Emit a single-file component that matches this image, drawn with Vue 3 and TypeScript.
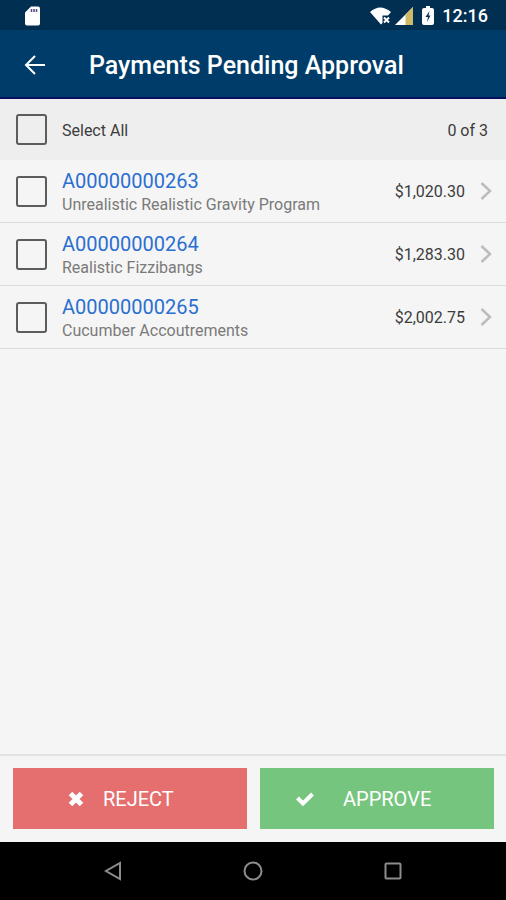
<script setup lang="ts">
import { computed, ref } from 'vue'

interface Payment {
  id: string
  program: string
  amount: number
}

const payments: Payment[] = [
  { id: 'A00000000263', program: 'Unrealistic Realistic Gravity Program', amount: 1020.3 },
  { id: 'A00000000264', program: 'Realistic Fizzibangs', amount: 1283.3 },
  { id: 'A00000000265', program: 'Cucumber Accoutrements', amount: 2002.75 },
]

const selected = ref<string[]>([])

const allSelected = computed<boolean>({
  get: () => selected.value.length === payments.length,
  set: (on) => {
    selected.value = on ? payments.map((p) => p.id) : []
  },
})

function money(value: number): string {
  return '$' + value.toLocaleString('en-US', { minimumFractionDigits: 2, maximumFractionDigits: 2 })
}
</script>

<template>
  <div class="screen">
    <div class="status">
      <svg class="sd" width="18" height="20" viewBox="0 0 18 20" aria-hidden="true">
        <path d="M7 0.500h7q2 0 2 2v15q0 2-2 2H3q-2 0-2-2V6.500z" fill="#fff" />
        <path d="M7.500 3v3M10 3v3M12.500 3v3" stroke="#4a4a86" stroke-width="1.500" />
      </svg>
      <div class="indicators">
        <svg class="wifi" width="22" height="18" viewBox="0 0 22 18" aria-hidden="true">
          <path d="M0 5Q10 -4 21 5L18 8.500H12.500V16L11 17.500Z" fill="#fff" />
          <path d="M14 10.500l5 5M19 10.500l-5 5" stroke="#fff" stroke-width="2" />
        </svg>
        <svg class="signal" width="18" height="18" viewBox="0 0 18 18" aria-hidden="true">
          <path d="M0 18L18 0V18z" fill="#fff" />
          <path d="M10.500 7.500L18 0V18H10.500z" fill="#cdb967" />
        </svg>
        <svg class="battery" width="12" height="20" viewBox="0 0 12 20" aria-hidden="true">
          <path d="M4 0h4v2h2q2 0 2 2v13q0 2-2 2H2q-2 0-2-2V4q0-2 2-2h2z" fill="#fff" />
          <path d="M7.500 5L3.500 11h2.500L5 16L8.500 9.500H6.500z" fill="#0b2f52" />
        </svg>
        <span class="clock">12:16</span>
      </div>
    </div>

    <header class="bar">
      <button class="back" type="button" aria-label="Back">
        <svg width="22" height="22" viewBox="0 0 22 22" fill="none" stroke="#fff" stroke-width="2" aria-hidden="true">
          <path d="M21 11H2.500M11 2L2 11l9 9" />
        </svg>
      </button>
      <h1>Payments Pending Approval</h1>
    </header>

    <main>
      <div class="row all">
        <input id="select-all" v-model="allSelected" type="checkbox" />
        <label class="name" for="select-all">Select All</label>
        <span class="count">{{ selected.length }} of {{ payments.length }}</span>
      </div>
      <ul>
        <li v-for="p in payments" :key="p.id" class="row">
          <input :id="p.id" v-model="selected" type="checkbox" :value="p.id" />
          <label class="info" :for="p.id">
            <span class="number">{{ p.id }}</span>
            <span class="program">{{ p.program }}</span>
          </label>
          <a class="open" href="#" :aria-label="'Open ' + p.id">
            <span>{{ money(p.amount) }}</span>
            <svg width="12" height="20" viewBox="0 0 12 20" fill="none" stroke="#bcbcbc" stroke-width="2.500" aria-hidden="true">
              <path d="M1.500 2L10 10l-8.500 8" />
            </svg>
          </a>
        </li>
      </ul>
    </main>

    <footer class="actions">
      <button class="reject" type="button">
        <svg width="16" height="16" viewBox="0 0 16 16" stroke="#fff" stroke-width="5" aria-hidden="true">
          <path d="M2.500 2.500l11 11M13.500 2.500l-11 11" />
        </svg>
        <span>REJECT</span>
      </button>
      <button class="approve" type="button">
        <svg width="18" height="16" viewBox="0 0 18 16" fill="none" stroke="#fff" stroke-width="4" aria-hidden="true">
          <path d="M1.500 7L7 12.500L16.500 3" />
        </svg>
        <span>APPROVE</span>
      </button>
    </footer>

    <nav class="system">
      <button type="button" aria-label="System back">
        <svg width="20" height="20" viewBox="0 0 20 20" aria-hidden="true"><path d="M17 2v16L3 10z" /></svg>
      </button>
      <button type="button" aria-label="Home">
        <svg width="20" height="20" viewBox="0 0 20 20" aria-hidden="true"><circle cx="10" cy="10" r="8.500" /></svg>
      </button>
      <button type="button" aria-label="Recent apps">
        <svg width="20" height="20" viewBox="0 0 20 20" aria-hidden="true"><rect x="2.500" y="2.500" width="15" height="15" rx="1" /></svg>
      </button>
    </nav>
  </div>
</template>

<style>
body {
  margin: 0;
}
</style>

<style scoped>
.screen {
  display: flex;
  flex-direction: column;
  min-height: 100vh;
  background: #f5f5f5;
  color: #3c3c3c;
  font-family: Roboto, "Liberation Sans", sans-serif;
  font-size: 16px;
  line-height: 20px;
}

svg {
  display: block;
  flex: none;
}

button {
  padding: 0;
  border: 0;
  background: none;
  font: inherit;
  cursor: pointer;
}

.status {
  display: flex;
  align-items: center;
  justify-content: space-between;
  box-sizing: border-box;
  height: 30px;
  padding: 1px 18px 0 24px;
  background: #002f52;
  color: #fff;
}

.indicators {
  display: flex;
  align-items: center;
}

.signal {
  margin-left: 3px;
}

.battery {
  margin: 0 8px 0 9px;
}

.clock {
  font-size: 18px;
  font-weight: 500;
}

.bar {
  display: flex;
  align-items: center;
  gap: 43px;
  box-sizing: border-box;
  height: 69px;
  padding: 2px 24px 0;
  border-bottom: 2px solid #06105e;
  background: #003c69;
}

h1 {
  margin: 0;
  padding-top: 2px;
  color: #fff;
  font-size: 25px;
  font-weight: 500;
  line-height: 32px;
}

main {
  flex: 1;
}

ul {
  margin: 0;
  padding: 0;
  list-style: none;
}

.row {
  display: flex;
  align-items: center;
  height: 62px;
  padding: 0 14px 0 16px;
  border-bottom: 1px solid #dcdcdc;
}

.row.all {
  height: 61px;
  padding-right: 18px;
  border-bottom: 0;
  background: #eee;
}

input {
  flex: none;
  width: 31px;
  height: 31px;
  margin: 0 15px 0 0;
  border: 2px solid #5c5c5c;
  border-radius: 3px;
  appearance: none;
}

input:checked {
  background: #5c5c5c;
  box-shadow: inset 0 0 0 5px #f5f5f5;
}

.name,
.info {
  flex: 1;
}

.name,
.count,
.open span {
  padding-top: 2px;
}

.info {
  padding-top: 3px;
}

.number,
.program {
  display: block;
}

.number {
  color: #2a6fd0;
  font-size: 20px;
  line-height: 24px;
}

.program {
  color: #7a7a7a;
  line-height: 24px;
}

.open {
  display: flex;
  align-items: center;
  gap: 15px;
  color: inherit;
  text-decoration: none;
}

.actions {
  display: grid;
  grid-template-columns: 1fr 1fr;
  gap: 13px;
  padding: 12px 12px 13px 13px;
  border-top: 2px solid #e2e2e2;
}

.actions button {
  display: flex;
  align-items: center;
  height: 61px;
  color: #fff;
  font-size: 20px;
}

.reject {
  gap: 19px;
  padding-left: 55px;
  background: #e56e6e;
}

.approve {
  gap: 29px;
  padding-left: 36px;
  background: #76c57f;
}

.system {
  display: flex;
  align-items: center;
  justify-content: center;
  gap: 120px;
  height: 58px;
  background: #000;
}

.system svg {
  fill: none;
  stroke: #8c8c8c;
  stroke-width: 2;
}
</style>
